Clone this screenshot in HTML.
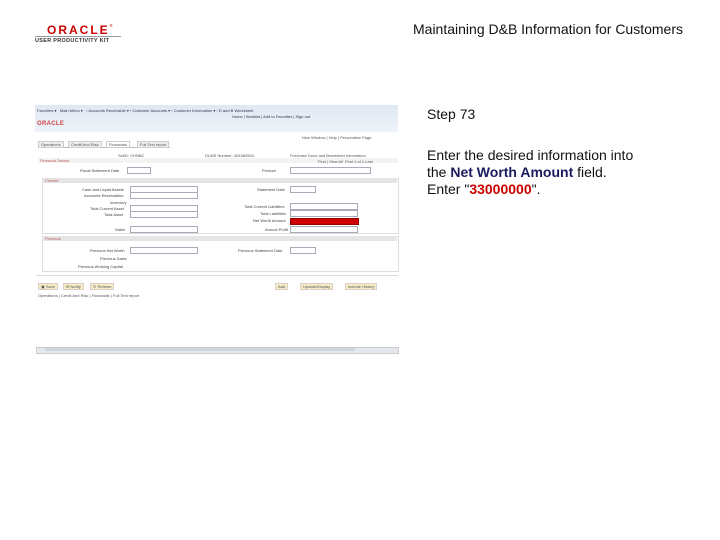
<!DOCTYPE html>
<html><head><meta charset="utf-8"><style>
body{margin:0;width:720px;height:540px;background:#fff;position:relative;overflow:hidden;font-family:"Liberation Sans",sans-serif}
.a{position:absolute}
.t{position:absolute;font-size:4px;color:#555;white-space:nowrap;line-height:5px}
.in{position:absolute;height:5px;border:1px solid #aab;background:#fff}
.lbl{position:absolute;font-size:4px;color:#444;white-space:nowrap;text-align:right;line-height:5px}
</style></head><body>
<div class="a" style="left:47px;top:23px;font-size:12px;font-weight:bold;color:#c00;letter-spacing:2px;font-family:'Liberation Sans',sans-serif">ORACLE<span style="font-size:4px;vertical-align:top">®</span></div>
<div class="a" style="left:35px;top:36px;width:86px;height:1px;background:#999"></div>
<div class="a" style="left:35px;top:38px;font-size:5.5px;font-weight:bold;color:#333;letter-spacing:.3px">USER PRODUCTIVITY KIT</div>
<div class="a" style="left:413px;top:21px;font-size:14px;color:#111">Maintaining D&amp;B Information for Customers</div>
<div class="a" style="left:427px;top:106px;font-size:14px;color:#111">Step 73</div>
<div class="a" style="left:427px;top:147px;font-size:14px;color:#111;line-height:17px">Enter the desired information into<br>the <b style="color:#1a1a5e">Net Worth Amount</b> field.<br>Enter "<b style="color:#c00">33000000</b>".</div>

<div class="a" style="left:35px;top:105px;width:363px;height:27px;background:linear-gradient(#dfe8f3,#eef3f9)"></div>
<div class="t" style="left:37px;top:108px;color:#335">Favorites ▾ &nbsp; Main Menu ▾ &nbsp; › Accounts Receivable ▾ › Customer Accounts ▾ › Customer Information ▾ › D and B Worksheet</div>
<div class="t" style="left:232px;top:114px;color:#335">Home | Worklist | Add to Favorites | Sign out</div>
<div class="a" style="left:37px;top:121px;font-size:6px;font-weight:bold;color:#c44;letter-spacing:.3px">ORACLE</div>
<div class="t" style="left:302px;top:135px">New Window | Help | Personalize Page</div>
<div class="a" style="left:38px;top:140px;width:132px;height:7px;border-bottom:1px solid #bbb"></div>
<div class="t" style="left:38px;top:141px;background:#eee;border:1px solid #ccc;padding:0 2px">Operations</div>
<div class="t" style="left:68px;top:141px;background:#eee;border:1px solid #ccc;padding:0 2px">Credit And Risk</div>
<div class="t" style="left:106px;top:141px;background:#fff;border:1px solid #ccc;padding:0 2px">Financials</div>
<div class="t" style="left:137px;top:141px;background:#eee;border:1px solid #ccc;padding:0 2px">Full Text report</div>
<div class="t" style="left:118px;top:153px">SetID: CHNBC</div>
<div class="t" style="left:205px;top:153px">DUNS Number: 404383500</div>
<div class="t" style="left:290px;top:153px">Purchase Duns and Bradstreet Information</div>
<div class="a" style="left:38px;top:158px;width:360px;height:5px;background:#f3f3f3"></div>
<div class="t" style="left:40px;top:158px;color:#b55">Financial Details</div>
<div class="t" style="left:318px;top:159px">Find | View All &nbsp;First 1 of 1 Last</div>
<div class="lbl" style="left:80px;top:168px">Fiscal Statement Date</div><div class="in" style="left:127px;top:167px;width:22px"></div>
<div class="lbl" style="left:262px;top:168px">Product</div><div class="in" style="left:290px;top:167px;width:79px"></div>
<div class="a" style="left:42px;top:178px;width:355px;height:54px;border:1px solid #ddd"></div>
<div class="a" style="left:42px;top:178px;width:355px;height:5px;background:#e5e5e5"></div>
<div class="t" style="left:45px;top:178px;color:#b55">Current</div>
<div class="lbl" style="left:82px;top:187px">Cash and Liquid Assets</div><div class="in" style="left:130px;top:186px;width:66px"></div>
<div class="lbl" style="left:84px;top:193px">Accounts Receivables</div><div class="in" style="left:130px;top:192px;width:66px"></div>
<div class="lbl" style="left:110px;top:200px">Inventory</div>
<div class="lbl" style="left:90px;top:206px">Total Current Asset</div><div class="in" style="left:130px;top:205px;width:66px"></div>
<div class="lbl" style="left:104px;top:212px">Total Asset</div><div class="in" style="left:130px;top:211px;width:66px"></div>
<div class="lbl" style="left:115px;top:227px">Sales</div><div class="in" style="left:130px;top:226px;width:66px"></div>
<div class="lbl" style="left:257px;top:187px">Statement Date</div><div class="in" style="left:290px;top:186px;width:24px"></div>
<div class="lbl" style="left:244px;top:204px">Total Current Liabilities</div><div class="in" style="left:290px;top:203px;width:66px"></div>
<div class="lbl" style="left:260px;top:211px">Total Liabilities</div><div class="in" style="left:290px;top:210px;width:66px"></div>
<div class="lbl" style="left:253px;top:218px">Net Worth Amount</div>
<div class="a" style="left:290px;top:218px;width:67px;height:5px;background:#c00;border:1px solid #900"></div>
<div class="lbl" style="left:265px;top:227px">Annual Profit</div><div class="in" style="left:290px;top:226px;width:66px"></div>
<div class="a" style="left:42px;top:236px;width:355px;height:34px;border:1px solid #ddd"></div>
<div class="a" style="left:42px;top:236px;width:355px;height:5px;background:#e5e5e5"></div>
<div class="t" style="left:45px;top:236px;color:#b55">Previous</div>
<div class="lbl" style="left:90px;top:248px">Previous Net Worth</div><div class="in" style="left:130px;top:247px;width:66px"></div>
<div class="lbl" style="left:100px;top:256px">Previous Sales</div>
<div class="lbl" style="left:78px;top:264px">Previous Working Capital</div>
<div class="lbl" style="left:238px;top:248px">Previous Statement Date</div><div class="in" style="left:290px;top:247px;width:24px"></div>
<div class="a" style="left:36px;top:275px;width:362px;height:1px;background:#ddd"></div>
<div class="t" style="left:38px;top:283px;background:#f6ecc6;border:1px solid #dcc;padding:0 2px">▣ Save</div>
<div class="t" style="left:63px;top:283px;background:#f6ecc6;border:1px solid #dcc;padding:0 2px">✉ Notify</div>
<div class="t" style="left:90px;top:283px;background:#f6ecc6;border:1px solid #dcc;padding:0 2px">↻ Refresh</div>
<div class="t" style="left:275px;top:283px;background:#f6ecc6;border:1px solid #dcc;padding:0 2px">Add</div>
<div class="t" style="left:300px;top:283px;background:#f6ecc6;border:1px solid #dcc;padding:0 2px">Update/Display</div>
<div class="t" style="left:345px;top:283px;background:#f6ecc6;border:1px solid #dcc;padding:0 2px">Include History</div>
<div class="t" style="left:38px;top:293px">Operations | Credit And Risk | Financials | Full Text report</div>
<div class="a" style="left:36px;top:347px;width:361px;height:5px;background:#e4e8ec;border:1px solid #ccc"></div>
<div class="a" style="left:45px;top:348px;width:310px;height:3px;background:#cfd6dd"></div>
</body></html>
